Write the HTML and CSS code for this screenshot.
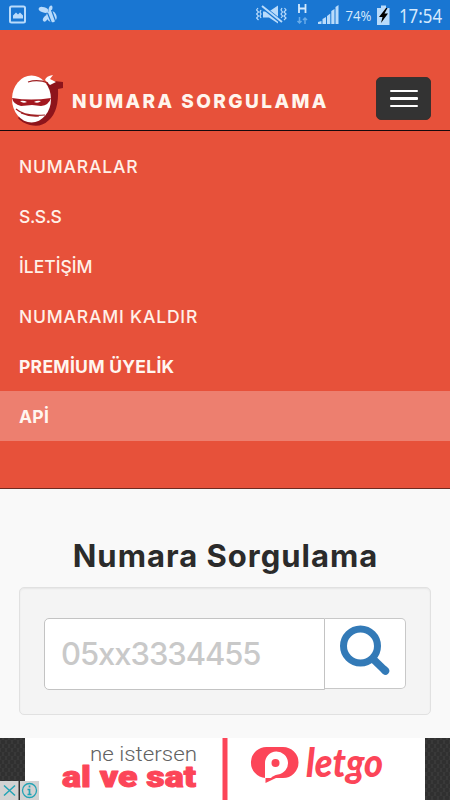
FILE: index.html
```html
<!DOCTYPE html>
<html lang="tr">
<head>
<meta charset="utf-8">
<title>Numara Sorgulama</title>
<link rel="stylesheet" href="styles.css">
</head>
<body>
<div class="status">
  <svg class="notifications" width="50" height="20" viewBox="0 0 50 20" fill="#b9dbfb">
    <rect x="2" y="1.5" width="15" height="16" rx="1.5" fill="none" stroke="#b9dbfb" stroke-width="2"/>
    <path d="M5 13.5v-3l3-3 2 2 2-2 3 3v3z"/>
    <ellipse cx="35.500" cy="4.800" rx="5" ry="2.700" transform="rotate(18 35.500 4.800)"/>
    <ellipse cx="42.500" cy="3.800" rx="1.800" ry="3.300" transform="rotate(15 42.500 3.800)"/>
    <ellipse cx="37.500" cy="13.500" rx="2" ry="3.500" transform="rotate(35 37.500 13.500)"/>
    <ellipse cx="43.500" cy="11.500" rx="5" ry="6" transform="rotate(-25 43.500 11.500)"/>
    <path d="M39.500 8l4 10M43.500 5l4 11" stroke="#1976d2" stroke-width="1.200" fill="none"/>
  </svg>
  <div class="indicators">
    <svg width="134" height="24" viewBox="0 0 134 24" fill="#b9dbfb">
      <path d="M7 8.500h6l9-6v18l-9-6H7z"/>
      <path d="M5 2.500l21 17" stroke="#1976d2" stroke-width="4"/>
      <path d="M6 3l20 16" stroke="#b9dbfb" stroke-width="2"/>
      <path d="M2 5l-1.500 2 2 2-2 2 2 2-2 2 2 2M5 7l-1 2 1 2-1 2 1 2M26 5l-1 2 1.500 2-1.500 2 1.500 2-1.500 2M28.500 5l1.500 2-2 2 2 2-2 2 2 2-2 2" fill="none" stroke="#b9dbfb" stroke-width="1.200"/>
      <path d="M43 1v9M49.500 1v9M43 5.500h6.500" stroke="#d5eafd" stroke-width="1.800"/>
      <path d="M43.500 14v6m-2-2l2 2 2-2M49 21v-6m-2 2l2-2 2 2" fill="none" stroke="#68abe9" stroke-width="1.500"/>
      <path d="M62 21v-2l3.500-1v3zM66.500 21v-5l3.500-2v7zM71 21v-8l3.300-2.500v10.500zM75.300 21V8l3.200-2v15zM79.500 21V4l3-2v19z"/>
      <text class="battery-text" x="89.500" y="17.500" textLength="26" lengthAdjust="spacingAndGlyphs">74%</text>
      <path d="M121 5h4V2.500h5V5h3.500v17h-12.500z"/>
      <path d="M130 5l-7 9h3.500l-1.500 6 7-9.500h-3.500l3-5.500z" fill="#000"/>
    </svg>
    <svg class="time" width="48" height="27" viewBox="0 0 48 27"><text class="clock" x="0" y="19.500" textLength="43" lengthAdjust="spacingAndGlyphs">17:54</text></svg>
  </div>
</div>
<header class="header">
  <div class="brand">
    <svg width="64" height="61" viewBox="0 0 64 61">
      <path d="M48 13l6-1 9 1v6l-5 1q1 22-9 31-8 8-19 5-8-2-12-7z" fill="#8e141b"/>
      <ellipse cx="31.500" cy="30" rx="19.500" ry="23.500" fill="#fff"/>
      <path d="M45 11q1-4 8-5l-3 4 6 3-6 3z" fill="#fff"/>
      <path d="M12 29q19 3 39 0-2 7-10 8l-9-1-11 1q-8-2-9-8z" fill="#a31820"/>
      <path d="M20 32q4-1 7 1-4 2-7-1zM34 33q3-2 7-1-3 3-7 1z" fill="#fff"/>
      <path d="M28 13q10-3 20 1M16 40q9 8 29 6M21 44q9 4 18 3" fill="none" stroke="#9f2023" stroke-width="1.200"/>
    </svg>
    <span class="brand-name">NUMARA SORGULAMA</span>
  </div>
  <button class="toggle" aria-label="Menü"><span></span><span></span><span></span></button>
</header>
<nav class="menu">
  <a class="wide">NUMARALAR</a>
  <a class="tight">S.S.S</a>
  <a>İLETİŞİM</a>
  <a class="wide">NUMARAMI KALDIR</a>
  <a class="strong">PREMİUM ÜYELİK</a>
  <a class="strong active">APİ</a>
</nav>
<main class="content">
  <h1>Numara Sorgulama</h1>
  <form class="well">
    <div class="field">05xx3334455</div>
    <div class="search">
      <svg width="52" height="52" viewBox="0 0 52 52"><circle cx="21.500" cy="21" r="17" fill="none" stroke="#337ab7" stroke-width="7"/><path d="M33 33l14 13.500" stroke="#337ab7" stroke-width="7.500"/><path d="M45.500 45l1 1" stroke="#337ab7" stroke-width="7.500" stroke-linecap="round"/></svg>
    </div>
  </form>
</main>
<footer class="ad">
  <div class="ad-tools">
    <svg width="39" height="19" viewBox="0 0 39 19" fill="none" stroke="#22a3b5"><path d="M0 0h18.500v19H0zM20 0h19v19H20z" fill="#d2d2d2" stroke="none"/><path d="M4 4.500l11 10M15 4.500l-11 10" stroke-width="1.500"/><circle cx="29.500" cy="9.500" r="7" stroke-width="1.300"/><path d="M29.500 4.500v2M27.500 8.500h2v5M27.500 13.500h4" stroke-width="1.700"/></svg>
  </div>
  <svg class="banner" width="400" height="62" viewBox="0 0 400 62">
    <text class="ad-small" x="65" y="22.500" textLength="107" lengthAdjust="spacingAndGlyphs">ne istersen</text>
    <text class="ad-big" x="37" y="49" textLength="134" lengthAdjust="spacingAndGlyphs">al ve sat</text>
    <path d="M197.500 0h5v62h-5z" fill="#fc4558"/>
    <path d="M242.500 9H258a15.500 15.500 0 0 1 0 31h-7l-10.500 5v-5a15.500 15.500 0 0 1 2-31z" fill="#fc4558"/>
    <path d="M240 40V25a11.500 11.500 0 1 1 13 11.500q-5 1-7 3.500z" fill="#fff"/>
    <circle cx="250.500" cy="25" r="4" fill="#fc4558"/>
    <text class="letgo" x="281" y="39" textLength="77" lengthAdjust="spacingAndGlyphs">letgo</text>
  </svg>
</footer>
</body>
</html>
```
FILE: styles.css
```css
* { box-sizing: border-box; }
body { margin: 0; width: 450px; height: 800px; overflow: hidden; display: flex; flex-direction: column; background: #f9f9f9; font-family: Inter, sans-serif; }
.status { height: 30px; flex: none; background: #1976d2; display: flex; justify-content: space-between; padding: 3px 3px 0 8px; }
.notifications { margin-top: 2px; }
.indicators { display: flex; gap: 9px; }
.time { overflow: visible; }
.battery-text { font: 14.5px "Open Sans", sans-serif; fill: #d5eafd; }
.clock { font: 19.5px "Noto Sans", sans-serif; fill: #d5eafd; }
.header { height: 101px; flex: none; background: #e7513a; border-bottom: 1px solid #16090c; display: flex; justify-content: space-between; align-items: flex-end; padding: 0 19px 0 0; }
.brand { display: flex; align-items: flex-end; gap: 8px; height: 61px; }
.brand-name { color: #fff5ed; font-size: 19px; font-weight: 800; line-height: 22px; letter-spacing: 2.42px; white-space: nowrap; margin-bottom: 17px; }
.toggle { width: 55px; height: 43px; background: #333; border: 1px solid #3b302e; border-radius: 5px; display: flex; flex-direction: column; align-items: center; justify-content: center; gap: 5px; margin-bottom: 10px; padding: 0; }
.toggle span { width: 28px; height: 2.5px; background: #fff; border-radius: 1px; }
.menu { height: 358px; flex: none; background: #e7513a; padding-top: 10px; border-bottom: 1px solid #6e2c22; }
.menu a { display: block; height: 50px; padding-left: 19px; line-height: 51px; font-size: 17.5px; font-weight: 500; color: #fff0e8; white-space: nowrap; }
.menu .wide { letter-spacing: .82px; }
.menu .tight { letter-spacing: -.4px; }
.menu .strong { font-weight: 700; color: #fff6f0; letter-spacing: .28px; }
.menu .active { background: #ed7f6f; }
.content { height: 249px; flex: none; padding: 47px 19px 0; }
h1 { margin: 0; height: 40px; line-height: 40px; font-size: 31px; font-weight: 700; letter-spacing: 1px; text-indent: 1px; color: #2b2b2b; text-align: center; white-space: nowrap; }
.well { margin-top: 11px; height: 128px; border: 1px solid #e1e1e1; border-radius: 5px; background: #f4f4f4; box-shadow: inset 0 1px 2px rgba(0,0,0,.06); padding: 30px 24px; display: flex; align-items: flex-start; }
.field { flex: none; width: 281px; height: 72px; border: 1px solid #c3c3c3; border-radius: 5px 0 0 5px; background: #fff; padding-left: 16px; line-height: 70px; font-size: 31px; font-weight: 500; letter-spacing: -1.05px; color: #c9c9c9; }
.search { width: 81px; height: 71px; border: 1px solid #c8c8c8; border-left: 0; border-radius: 0 5px 5px 0; background: #fff; padding: 6px 0 0 14px; }
.ad { height: 62px; display: flex; justify-content: center; position: relative; background-color: #393939; background-image: radial-gradient(circle, #303030 2px, transparent 2.5px), radial-gradient(circle, #303030 2px, transparent 2.5px); background-size: 6px 8px; background-position: 0 0, 3px 4px; }
.banner { background: #fff; }
.ad-tools { position: absolute; left: 0; bottom: 0; height: 19px; }
.ad-small { font: 300 21px Roboto, sans-serif; fill: #626262; }
.ad-big { font: 900 30px Roboto, sans-serif; fill: #fc4558; stroke: #fc4558; stroke-width: 1px; stroke-linejoin: round; }
.letgo { font: italic 900 39px Lato, sans-serif; fill: #fc4558; }
```
